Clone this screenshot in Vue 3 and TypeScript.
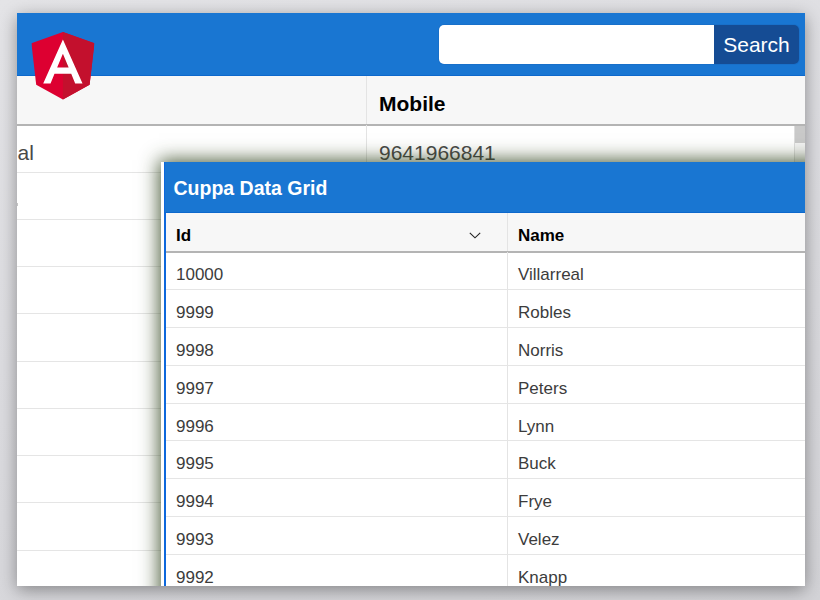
<script setup lang="ts">
interface Person {
  id: number
  name: string
}

const people: Person[] = [
  { id: 10000, name: 'Villarreal' },
  { id: 9999, name: 'Robles' },
  { id: 9998, name: 'Norris' },
  { id: 9997, name: 'Peters' },
  { id: 9996, name: 'Lynn' },
  { id: 9995, name: 'Buck' },
  { id: 9994, name: 'Frye' },
  { id: 9993, name: 'Velez' },
  { id: 9992, name: 'Knapp' },
]

const backRows: { name: string; mobile: string; mark?: boolean }[] = [
  { name: 'al', mobile: '9641966841' },
  { name: '', mobile: '', mark: true },
  ...Array.from({ length: 8 }, () => ({ name: '', mobile: '' })),
]
</script>

<template>
  <div class="stage">
    <main class="card">
      <section class="back">
        <header class="bar">
          <form class="search" @submit.prevent>
            <input class="field" type="text" aria-label="Search" />
            <button class="button" type="submit">Search</button>
          </form>
        </header>
        <div class="back-head">
          <div class="back-left"></div>
          <div class="back-right">Mobile</div>
        </div>
        <div class="back-body">
          <div v-for="(row, i) in backRows" :key="i" class="back-row">
            <div class="back-left" :class="{ mark: row.mark }">{{ row.name }}</div>
            <div class="back-right">{{ row.mobile }}</div>
          </div>
          <div class="scroll"><div class="scroll-button"></div></div>
        </div>
      </section>

      <svg class="logo" viewBox="31.9 30 186.2 200" preserveAspectRatio="none" aria-hidden="true">
        <path fill="#dd0031" d="M125 30 31.9 63.2l14.2 123.1L125 230l78.9-43.7 14.2-123.1z" />
        <path fill="#c3102d" d="M125 30v200l78.9-43.7 14.2-123.1z" />
        <path
          fill="#fff"
          d="M125 52.1 66.8 182.6h21.7l11.7-29.2h49.4l11.7 29.2H183zm17 83.3h-34l17-40.9z"
        />
      </svg>

      <section class="front">
        <div class="front-inner">
          <h1 class="title">Cuppa Data Grid</h1>
          <div class="front-head">
            <div class="cell-id">
              Id
              <svg class="chevron" viewBox="0 0 12 7" aria-hidden="true">
                <path d="M.8.8 6 5.8 11.2.8" fill="none" stroke="#222" stroke-width="1.15" />
              </svg>
            </div>
            <div class="cell-name">Name</div>
          </div>
          <div class="front-body">
            <div v-for="p in people" :key="p.id" class="front-row">
              <div class="cell-id">{{ p.id }}</div>
              <div class="cell-name">{{ p.name }}</div>
            </div>
          </div>
        </div>
      </section>
    </main>
  </div>
</template>

<style>
body {
  margin: 0;
  overflow: hidden;
}
</style>

<style scoped>
.stage,
.stage * {
  box-sizing: border-box;
}
.stage {
  width: 820px;
  height: 600px;
  padding: 13px 15px 14px 17px;
  background: linear-gradient(165deg, #e4e4e7 0%, #dcdce0 45%, #d3d3d7 100%);
  font-family: 'Liberation Sans', Arial, sans-serif;
}
.card {
  position: relative;
  width: 788px;
  height: 573px;
  box-shadow: 0 4px 16px rgba(0, 0, 0, 0.38);
  background: #fff;
  overflow: hidden;
}
.bar {
  display: flex;
  justify-content: flex-end;
  height: 63px;
  padding: 12px 6px 0 0;
  background: #1976d2;
  border-bottom: 1px solid #0d68cc;
}
.search {
  display: flex;
  width: 360px;
  height: 38.5px;
  margin: 0;
  border-radius: 5px;
  box-shadow: 0 0 0 1px #1870ca;
  overflow: hidden;
}
.field {
  width: 275px;
  height: 39px;
  border: 0;
  padding: 0 10px;
  background: #fff;
  font: 21px 'Liberation Sans', Arial, sans-serif;
  outline: none;
}
.button {
  width: 85px;
  height: 39px;
  border: 0;
  padding: 0;
  background: #154c94;
  color: #fff;
  font: 21px/39px 'Liberation Sans', Arial, sans-serif;
}
.back-head {
  display: flex;
  height: 50px;
  border-bottom: 2px solid #b4b4b4;
  background: #f7f7f7;
  font-size: 21px;
  font-weight: bold;
  line-height: 56px;
  color: #000;
}
.back-left {
  width: 350px;
  flex: none;
  border-right: 1px solid #e4e4e4;
  text-indent: 0.6px;
}
.back-left.mark::before {
  content: '';
  display: block;
  width: 1px;
  height: 3px;
  margin-top: 30px;
  background: #c4c4c4;
}
.back-right {
  flex: 1;
  padding-left: 12px;
}
.back-body {
  position: relative;
  margin-top: -0.6px;
}
.back-row {
  display: flex;
  height: 47.25px;
  border-bottom: 1px solid #e5e5e5;
  font-size: 21px;
  line-height: 55px;
  color: #484848;
}
.scroll {
  position: absolute;
  top: 0.6px;
  right: 0;
  width: 11px;
  height: 460px;
  background: #f4f4f4;
  border-left: 1px solid #ddd;
}
.scroll-button {
  height: 17px;
  background: #c9c9c9;
}
.logo {
  position: absolute;
  left: 14px;
  top: 19px;
  width: 63px;
  height: 67.5px;
  transform: translateX(0.4px);
}
.front {
  position: absolute;
  left: 144px;
  top: 149px;
  width: 700px;
  height: 480px;
  padding-left: 3px;
  background: #fff;
  box-shadow: 0 0 18px 2px rgba(45, 65, 25, 0.85);
}
.front-inner {
  height: 480px;
  border-left: 2px solid #0d68dc;
  background: #fff;
}
.title {
  height: 51px;
  margin: 0 0 0 -1px;
  padding-left: 8.5px;
  background: #1976d2;
  border-bottom: 1px solid #0d68cc;
  color: #fff;
  font-size: 19.5px;
  font-weight: bold;
  line-height: 52px;
}
.front-head {
  display: flex;
  height: 40px;
  border-bottom: 2px solid #b4b4b4;
  background: #f7f7f7;
  font-size: 17px;
  font-weight: bold;
  line-height: 45px;
  color: #000;
}
.front-body {
  margin-top: -0.6px;
}
.front-row {
  display: flex;
  height: 37.82px;
  border-bottom: 1px solid #e5e5e5;
  font-size: 17px;
  line-height: 45px;
  color: #3c3c3c;
}
.cell-id {
  display: flex;
  justify-content: space-between;
  flex: none;
  width: 342px;
  padding: 0 26px 0 10px;
  border-right: 1px solid #e4e4e4;
}
.cell-name {
  padding-left: 10px;
}
.chevron {
  width: 12px;
  height: 7px;
  margin-top: 19px;
}
</style>
